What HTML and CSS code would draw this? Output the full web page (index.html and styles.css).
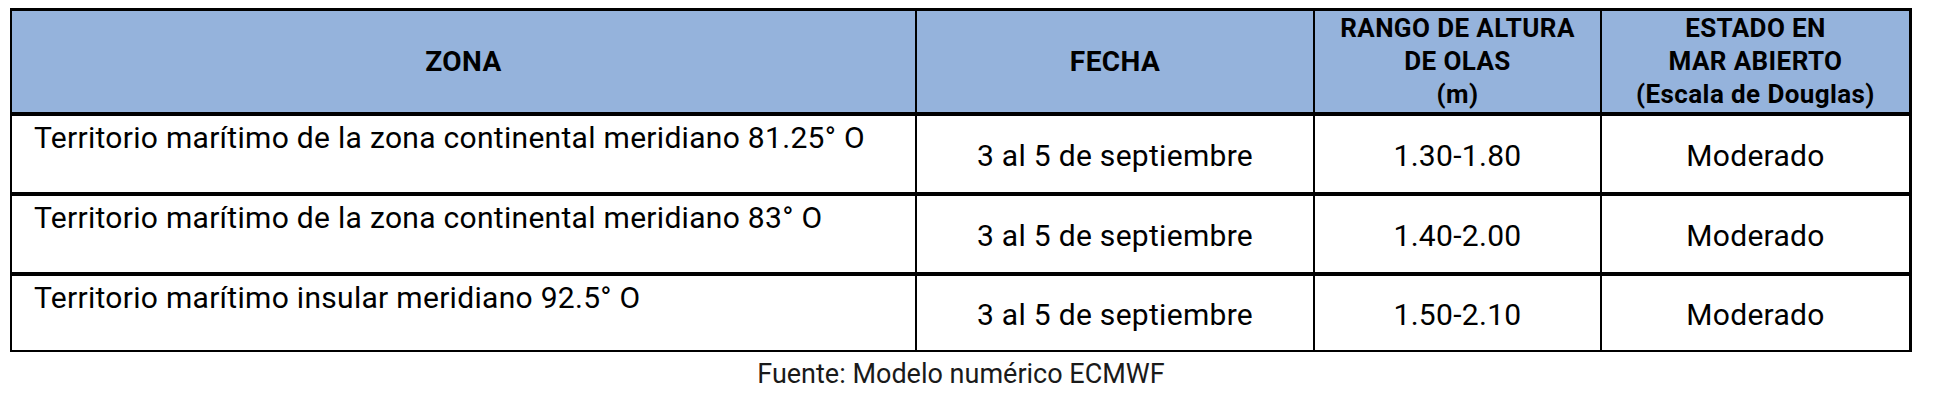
FILE: index.html
```html
<!DOCTYPE html>
<html lang="es">
<head>
<meta charset="utf-8">
<title>Altura de olas</title>
<link rel="stylesheet" href="styles.css">
</head>
<body>
<div class="wrap">
  <div class="grid" role="table">
    <div class="cell head head-big" role="columnheader">ZONA</div>
    <div class="cell head head-big" role="columnheader">FECHA</div>
    <div class="cell head" role="columnheader">RANGO DE ALTURA<br>DE OLAS<br>(m)</div>
    <div class="cell head" role="columnheader">ESTADO EN<br>MAR ABIERTO<br>(Escala de Douglas)</div>

    <div class="cell zone" role="cell">Territorio marítimo de la zona continental meridiano 81.25° O</div>
    <div class="cell val" role="cell">3 al 5 de septiembre</div>
    <div class="cell val" role="cell">1.30-1.80</div>
    <div class="cell val" role="cell">Moderado</div>

    <div class="cell zone" role="cell">Territorio marítimo de la zona continental meridiano 83° O</div>
    <div class="cell val" role="cell">3 al 5 de septiembre</div>
    <div class="cell val" role="cell">1.40-2.00</div>
    <div class="cell val" role="cell">Moderado</div>

    <div class="cell zone" role="cell">Territorio marítimo insular meridiano 92.5° O</div>
    <div class="cell val" role="cell">3 al 5 de septiembre</div>
    <div class="cell val" role="cell">1.50-2.10</div>
    <div class="cell val" role="cell">Moderado</div>
  </div>
  <p class="source">Fuente: Modelo numérico ECMWF</p>
</div>
</body>
</html>
```
FILE: styles.css
```css
html, body {
  margin: 0;
  padding: 0;
  background: #ffffff;
}

body {
  font-family: Roboto, "Liberation Sans", sans-serif;
  color: #000000;
}

.wrap {
  width: 1902px;
  margin: 8px 0 0 10px;
}

.grid {
  display: grid;
  grid-template-columns: 903px 396px 285px 307px;
  grid-template-rows: 101px 76px 76px 74px;
  column-gap: 2px;
  row-gap: 4px;
  padding: 3px 3px 2px 2px;
  background: #000000;
}

.cell {
  background: #ffffff;
  font-size: 30px;
  line-height: 35px;
  letter-spacing: 0.3px;
}

.head {
  background: #95b3dc;
  font-weight: 700;
  font-size: 26px;
  line-height: 33px;
  letter-spacing: 0.4px;
  display: flex;
  align-items: center;
  justify-content: center;
  text-align: center;
}

.head-big {
  font-size: 28px;
}

.zone {
  padding: 4px 0 0 22px;
}

.val {
  display: flex;
  align-items: center;
  justify-content: center;
  text-align: center;
  padding-top: 3px;
}

.source {
  margin: 6px 0 0 0;
  text-align: center;
  font-size: 27px;
  line-height: 32px;
  color: #1a1a1a;
}
```
